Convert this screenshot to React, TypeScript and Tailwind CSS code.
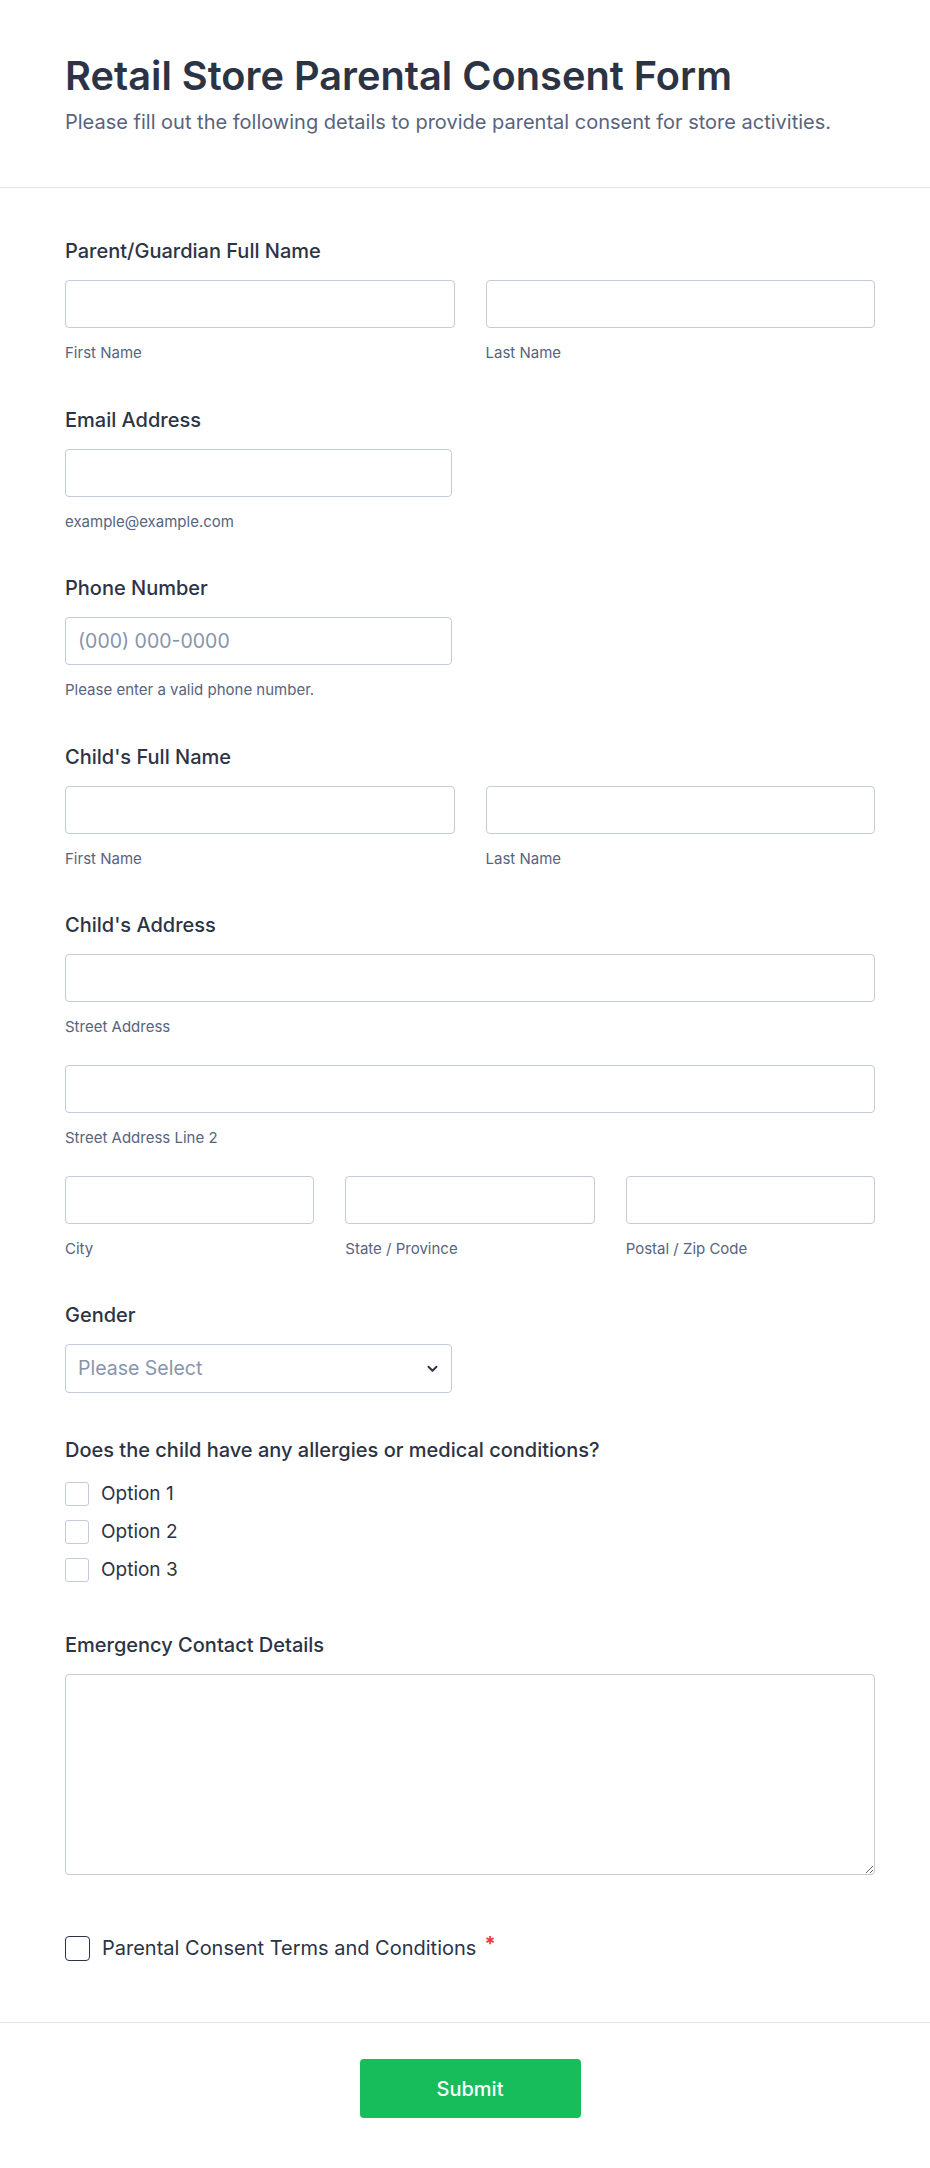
import React from "react";

const inputCls =
  "h-[48px] w-full rounded-[4px] border border-[#c3cad8] bg-white px-3 text-[19.5px] text-[#2c3345] outline-none placeholder:text-[#8894ab]";

function Label({ children }: { children: React.ReactNode }) {
  return <div className="text-[20px] font-medium leading-[28px] text-[#2c3345]">{children}</div>;
}

function Sub({ children }: { children: React.ReactNode }) {
  return <div className="mt-[15px] text-[15px] leading-[20px] text-[#57647e]">{children}</div>;
}

function Field({ sub, placeholder }: { sub?: string; placeholder?: string }) {
  return (
    <div className="flex flex-col">
      <input type="text" placeholder={placeholder} className={inputCls} />
      {sub && <Sub>{sub}</Sub>}
    </div>
  );
}

export default function App() {
  return (
    <div className="min-h-[2168px] w-full bg-white" style={{ fontFamily: "Inter, 'Noto Sans', sans-serif" }}>
      <div className="border-b border-[#e3e5f0] pl-[65px] pr-[55px] pt-[52px] pb-[51px]">
        <h1 className="text-[39.75px] font-semibold leading-[48px] text-[#2c3345]">Retail Store Parental Consent Form</h1>
        <p className="mt-[8px] text-[20px] leading-[28px] text-[#57647e]">
          Please fill out the following details to provide parental consent for store activities.
        </p>
      </div>

      <div className="flex flex-col pl-[65px] pr-[55px] pt-[49px]">
        <div className="mb-[42.5px] flex flex-col gap-[15px]">
          <Label>Parent/Guardian Full Name</Label>
          <div className="grid grid-cols-2 gap-[31px]">
            <Field sub="First Name" />
            <Field sub="Last Name" />
          </div>
        </div>

        <div className="mb-[42.5px] flex flex-col gap-[15px]">
          <Label>Email Address</Label>
          <div className="w-[387px]">
            <Field sub="example@example.com" />
          </div>
        </div>

        <div className="mb-[42.5px] flex flex-col gap-[15px]">
          <Label>Phone Number</Label>
          <div className="w-[387px]">
            <Field placeholder="(000) 000-0000" sub="Please enter a valid phone number." />
          </div>
        </div>

        <div className="mb-[42.5px] flex flex-col gap-[15px]">
          <Label>Child's Full Name</Label>
          <div className="grid grid-cols-2 gap-[31px]">
            <Field sub="First Name" />
            <Field sub="Last Name" />
          </div>
        </div>

        <div className="mb-[42px] flex flex-col gap-[15px]">
          <Label>Child's Address</Label>
          <div className="flex flex-col gap-[28px]">
            <Field sub="Street Address" />
            <Field sub="Street Address Line 2" />
            <div className="grid grid-cols-3 gap-[31px]">
              <Field sub="City" />
              <Field sub="State / Province" />
              <Field sub="Postal / Zip Code" />
            </div>
          </div>
        </div>

        <div className="mb-[43px] flex flex-col gap-[15px]">
          <Label>Gender</Label>
          <div className="relative flex h-[49px] w-[387px] items-center rounded-[4px] border border-[#c3cad8] px-3">
            <span className="text-[19.5px] text-[#8894ab]">Please Select</span>
            <svg className="absolute right-[13px] top-[20px]" width="11" height="8" viewBox="0 0 11 8" fill="none">
              <path d="M1.5 1.8L5.5 5.8L9.5 1.8" stroke="#2c3345" strokeWidth="2" strokeLinecap="round" strokeLinejoin="round" />
            </svg>
          </div>
        </div>

        <div className="mb-[42px] flex flex-col">
          <Label>Does the child have any allergies or medical conditions?</Label>
          <div className="mt-[11px] flex flex-col">
            {["Option 1", "Option 2", "Option 3"].map((o) => (
              <label key={o} className="flex h-[38px] items-center gap-[12px]">
                <span className="h-[24px] w-[24px] rounded-[3px] border border-[#c3cad8] bg-white" />
                <span className="text-[19px] text-[#2c3345]">{o}</span>
              </label>
            ))}
          </div>
        </div>

        <div className="flex flex-col gap-[15px]">
          <Label>Emergency Contact Details</Label>
          <textarea className="h-[201px] w-full resize-y rounded-[4px] border border-[#c3cad8] bg-white p-3 text-[18px] outline-none" />
        </div>

        <div className="mt-[58px] mb-[59px] flex items-center gap-[12px]">
          <span className="h-[25px] w-[25px] rounded-[4px] border-[1.5px] border-[#2c3345] bg-white" />
          <span className="text-[20px] text-[#2c3345]">
            Parental Consent Terms and Conditions
            <span className="relative -top-[4px] ml-[8px] text-[20px] font-bold text-[#f23a3c]">*</span>
          </span>
        </div>
      </div>

      <div className="flex justify-center border-t border-[#e3e5f0] pl-[65px] pr-[55px] pt-[36px] pb-[50px]">
        <button className="h-[59px] w-[221px] rounded-[4px] bg-[#18bd5b] text-[20px] font-medium text-white">Submit</button>
      </div>
    </div>
  );
}
